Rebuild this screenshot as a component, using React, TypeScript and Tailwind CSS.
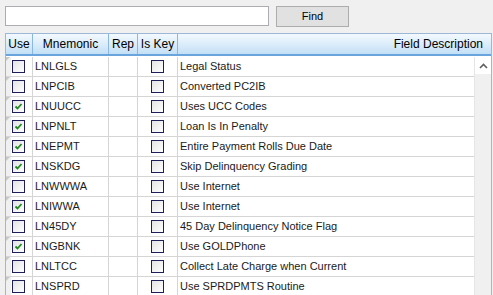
import React from "react";

const rows = [
  { code: "LNLGLS", desc: "Legal Status", use: false },
  { code: "LNPCIB", desc: "Converted PC2IB", use: false },
  { code: "LNUUCC", desc: "Uses UCC Codes", use: true },
  { code: "LNPNLT", desc: "Loan Is In Penalty", use: true },
  { code: "LNEPMT", desc: "Entire Payment Rolls Due Date", use: true },
  { code: "LNSKDG", desc: "Skip Delinquency Grading", use: true },
  { code: "LNWWWA", desc: "Use Internet", use: false },
  { code: "LNIWWA", desc: "Use Internet", use: true },
  { code: "LN45DY", desc: "45 Day Delinquency Notice Flag", use: false },
  { code: "LNGBNK", desc: "Use GOLDPhone", use: true },
  { code: "LNLTCC", desc: "Collect Late Charge when Current", use: false },
  { code: "LNSPRD", desc: "Use SPRDPMTS Routine", use: false },
];

function CheckBox({ checked }: { checked: boolean }) {
  return (
    <span className="w-[13px] h-[13px] border border-[#1e1e5a] bg-gradient-to-br from-[#e4e4e4] to-white flex items-center justify-center">
      {checked && (
        <svg width="9" height="9" viewBox="0 0 9 9">
          <path d="M1.5 4.5 L3.5 6.5 L7.5 2" fill="none" stroke="#1f8a1f" strokeWidth="1.8" />
        </svg>
      )}
    </span>
  );
}

export default function App() {
  return (
    <div className="w-[493px] h-[295px] bg-[#f0f0f0] overflow-hidden font-['Liberation_Sans',sans-serif] text-[11px] text-[#1a1a1a]">
      {/* Search bar */}
      <div className="flex items-start gap-[7px] pl-[5px] pt-[6px]">
        <input className="w-[264px] h-[20px] bg-white border border-[#abadb3] outline-none px-1" />
        <button className="w-[73px] h-[21px] bg-[#e1e1e1] border border-[#adadad] text-[11px] text-black">
          Find
        </button>
      </div>

      {/* Grid */}
      <div className="ml-[5px] mt-[6px] w-[487px] border-l border-t border-r border-[#9cb8d6] bg-white">
        {/* Header */}
        <div className="flex h-[22px] bg-gradient-to-b from-[#f3f9fe] via-[#dcedfb] to-[#c2dff6] border-b-2 border-[#6aa4dc] text-[12px] text-black">
          <div className="w-[27px] border-r border-[#8ab8e4] flex items-center justify-center">Use</div>
          <div className="w-[76px] border-r border-[#8ab8e4] flex items-center justify-center">Mnemonic</div>
          <div className="w-[29px] border-r border-[#8ab8e4] flex items-center justify-center">Rep</div>
          <div className="w-[40px] border-r border-[#8ab8e4] flex items-center justify-center">Is Key</div>
          <div className="flex-1 flex items-center justify-end pr-[8px]">Field Description</div>
        </div>

        {/* Body */}
        <div className="flex pt-[1px]">
          <div className="w-[468px] flex flex-col">
            {rows.map((r) => (
              <div key={r.code} className="flex h-[20px] border-b border-[#d5d5d5]">
                <div className="w-[5px] bg-[#f0f0f0] relative">
                  <span className="absolute left-0 top-0 w-0 h-0 border-t-[4px] border-r-[4px] border-t-[#c8c8c8] border-r-transparent" />
                </div>
                <div className="w-[22px] border-r border-[#d5d5d5] flex items-center pl-[1px]">
                  <CheckBox checked={r.use} />
                </div>
                <div className="w-[76px] border-r border-[#d5d5d5] flex items-center pl-[2px]">{r.code}</div>
                <div className="w-[29px] border-r border-[#d5d5d5]" />
                <div className="w-[40px] border-r border-[#d5d5d5] flex items-center justify-center">
                  <CheckBox checked={false} />
                </div>
                <div className="flex-1 flex items-center pl-[2px]">{r.desc}</div>
              </div>
            ))}
          </div>
          {/* Scrollbar */}
          <div className="w-[17px] bg-[#f0f0f0] border-l border-[#e6e6e6] flex flex-col">
            <div className="h-[17px] bg-white flex items-center justify-center">
              <svg width="9" height="6" viewBox="0 0 9 6">
                <path d="M1 5 L4.5 1.5 L8 5" fill="none" stroke="#606060" strokeWidth="1.6" />
              </svg>
            </div>
          </div>
        </div>
      </div>
    </div>
  );
}
